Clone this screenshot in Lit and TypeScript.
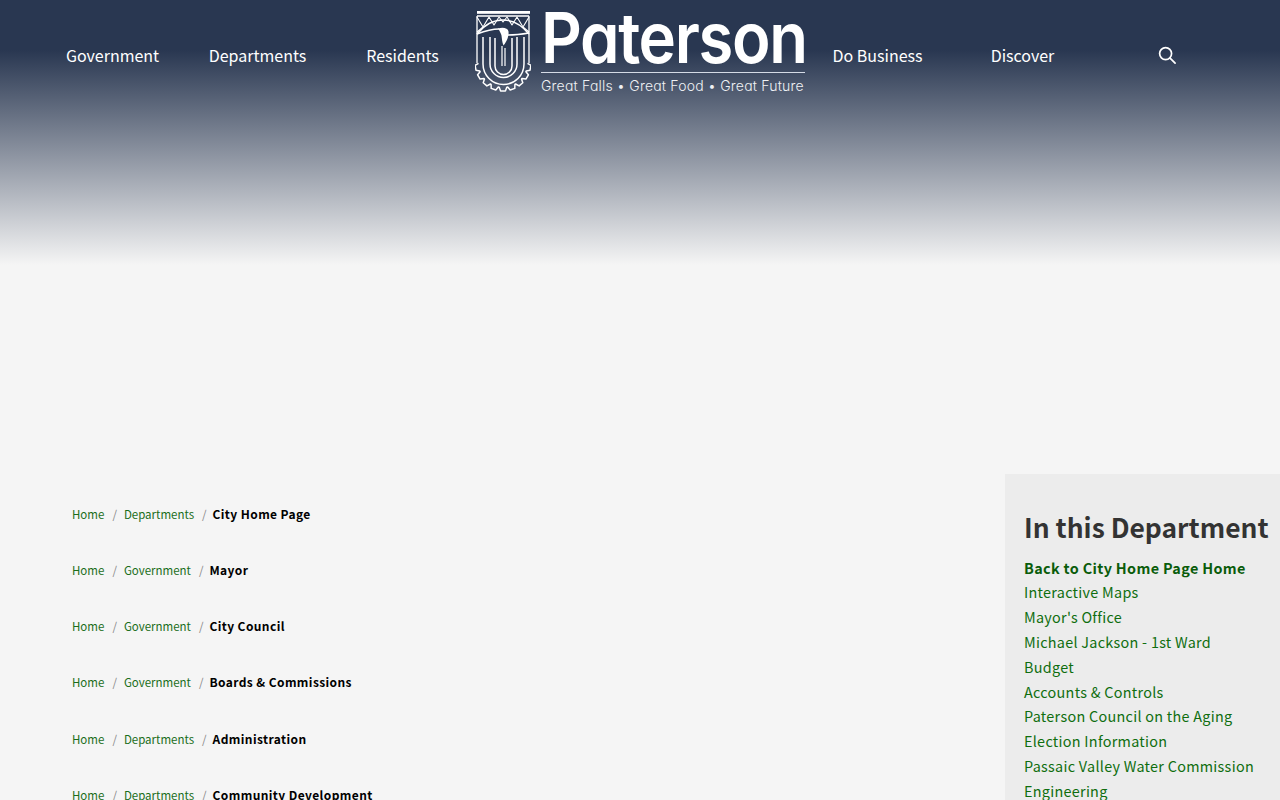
import { LitElement, html, css, svg } from "lit";
import { customElement } from "lit/decorators.js";

const crumbs: [string, string][] = [
  ["Departments", "City Home Page"],
  ["Government", "Mayor"],
  ["Government", "City Council"],
  ["Government", "Boards & Commissions"],
  ["Departments", "Administration"],
  ["Departments", "Community Development"],
];
const links = [
  "Interactive Maps",
  "Mayor's Office",
  "Michael Jackson - 1st Ward",
  "Budget",
  "Accounts & Controls",
  "Paterson Council on the Aging",
  "Election Information",
  "Passaic Valley Water Commission",
  "Engineering",
];

function gearPath(): string {
  const cx = 28, cy = 53, R = 28, r = 24.500, teeth = 9;
  const pts: string[] = [];
  const step = Math.PI / teeth;
  for (let i = 0; i < teeth; i++) {
    const a = Math.PI - step * i;
    const w = step * 0.25;
    const seq: [number, number][] = [
      [a - w * 0.2, r],
      [a - w, R],
      [a - step + w, R],
      [a - step + w * 0.2, r],
    ];
    for (const [t, rad] of seq) {
      pts.push(`${(cx + rad * Math.cos(t)).toFixed(1)} ${(cy + rad * Math.sin(t)).toFixed(1)}`);
    }
  }
  return "M" + pts.join("L");
}

const emblem = svg`
<svg class="emblem" viewBox="0 0 56 84" width="56" height="84" fill="none" stroke="#fff" stroke-width="1.500" stroke-linejoin="round">
  <rect x="2" y="1" width="53" height="2.800" fill="#fff" stroke="none"/>
  <path d="M2 6H54M2 6V53M54 6V53" stroke-width="1.300"/>
  <path d="M2 7l6 10 6-10 5 8 5-8 4 5 4-5 5 8 5-8 6 10 6-10M8 17l-6 5M48 17l6 5" stroke-width="1.100"/>
  <path d="M2 24C10 14 19 10 28 10s18 4 26 14"/>
  <path d="M2 24C10 21 18 19 24 19"/>
  <path d="M23 18.500c5-1.500 10-.500 10.500 3 .500 4-1 9-5 14-1.500-3-1.500-7-2-10-.500-2-1.500-4-3.500-7z" fill="#fff" stroke="none"/>
  <path d="M33 25C40 25 48 24 54 23"/>
  <path d="M8 27V54a20.500 20.500 0 0 0 41 0V27"/>
  <path d="M15 27V54a13.500 13.500 0 0 0 27 0V27"/>
  <path d="M20 28V56a8.500 8.500 0 0 0 17 0V28"/>
  <path d="M27 36V56M30 38V56" stroke-width="1.200"/>
  <path d="${gearPath()}"/>
</svg>`;

@customElement("app-root")
export class AppRoot extends LitElement {
  static styles = css`
    :host {
      display: block;
      height: 800px;
      overflow: hidden;
      background: #f5f5f5;
      font-family: "Noto Sans CJK SC", "Noto Sans", sans-serif;
    }
    .hero {
      height: 474px;
      box-sizing: border-box;
      background: linear-gradient(180deg, #293751 0, #293751 50px, #f5f5f5 265px);
      background-repeat: no-repeat;
    }
    .nav {
      display: grid;
      grid-template-columns: repeat(3, 145px) 330px repeat(3, 145px);
      padding: 0 40px;
      height: 110px;
      color: #fff;
      font-size: 16px;
    }
    .nav a {
      display: flex;
      justify-content: center;
      padding-top: 43px;
      line-height: 25px;
      height: 25px;
    }
    .search {
      display: flex;
      justify-content: center;
      padding-top: 46px;
    }
    .logo {
      display: flex;
      gap: 10px;
      padding-top: 10px;
      align-items: flex-start;
    }
    .emblem {
      flex: none;
    }
    .brand {
      flex: 1;
      min-width: 0;
      font-family: Inter, "Noto Sans", sans-serif;
      font-feature-settings: "cv11";
    }
    .word {
      font-size: 70px;
      font-weight: 600;
      line-height: 56px;
      letter-spacing: -1.500px;
      white-space: nowrap;
      transform: scaleX(0.905);
      transform-origin: left center;
    }
    .rule {
      height: 1px;
      background: #d5dbe6;
      margin-top: 6px;
    }
    .tag {
      font-size: 14px;
      font-weight: 300;
      line-height: 18px;
      margin-top: 4px;
      letter-spacing: 0.2px;
      white-space: nowrap;
      color: #f0f2f5;
    }
    .main {
      display: grid;
      grid-template-columns: 1fr 275px;
    }
    .crumbs {
      padding: 28px 0 0 72px;
    }
    .crumb {
      display: flex;
      align-items: baseline;
      height: 24px;
      margin-bottom: 32.150px;
      font-size: 11.500px;
      line-height: 24px;
      white-space: nowrap;
    }
    .crumb a {
      color: #1b6e1b;
    }
    .crumb .sep {
      color: #888;
      padding: 0 7px 0 8px;
    }
    .crumb b {
      color: #000;
      font-size: 12px;
      font-weight: 700;
      letter-spacing: 0.4px;
      margin-left: -1px;
    }
    .side {
      background: #ececec;
      padding: 32px 0 0 19px;
      height: 400px;
    }
    h2 {
      margin: 0 0 8px;
      font-size: 26.400px;
      line-height: 42px;
      font-weight: 700;
      color: #333;
      white-space: nowrap;
    }
    .side a {
      display: block;
      font-size: 14.400px;
      line-height: 24.800px;
      color: #0f6e0f;
      letter-spacing: 0.28px;
      white-space: nowrap;
    }
    .side a.back {
      font-weight: 700;
      line-height: 24.400px;
      color: #0a5c0a;
      letter-spacing: 0.35px;
    }
  `;

  render() {
    return html`
      <div class="hero">
        <nav class="nav">
          <a>Government</a>
          <a>Departments</a>
          <a>Residents</a>
          <div class="logo">
            ${emblem}
            <div class="brand">
              <div class="word">Paterson</div>
              <div class="rule"></div>
              <div class="tag">Great Falls • Great Food • Great Future</div>
            </div>
          </div>
          <a>Do Business</a>
          <a>Discover</a>
          <div class="search">
            <svg width="19" height="19" viewBox="0 0 20 20" fill="none" stroke="#fff" stroke-width="1.800" stroke-linecap="round">
              <circle cx="8" cy="8" r="6.300"></circle>
              <path d="M12.700 12.700L18 18"></path>
            </svg>
          </div>
        </nav>
      </div>
      <div class="main">
        <div class="crumbs">
          ${crumbs.map(
            ([p, c]) => html`<div class="crumb">
              <a>Home</a><span class="sep">/</span><a>${p}</a><span class="sep">/</span><b>${c}</b>
            </div>`
          )}
        </div>
        <aside class="side">
          <h2>In this Department</h2>
          <a class="back">Back to City Home Page Home</a>
          ${links.map((l) => html`<a>${l}</a>`)}
        </aside>
      </div>
    `;
  }
}
